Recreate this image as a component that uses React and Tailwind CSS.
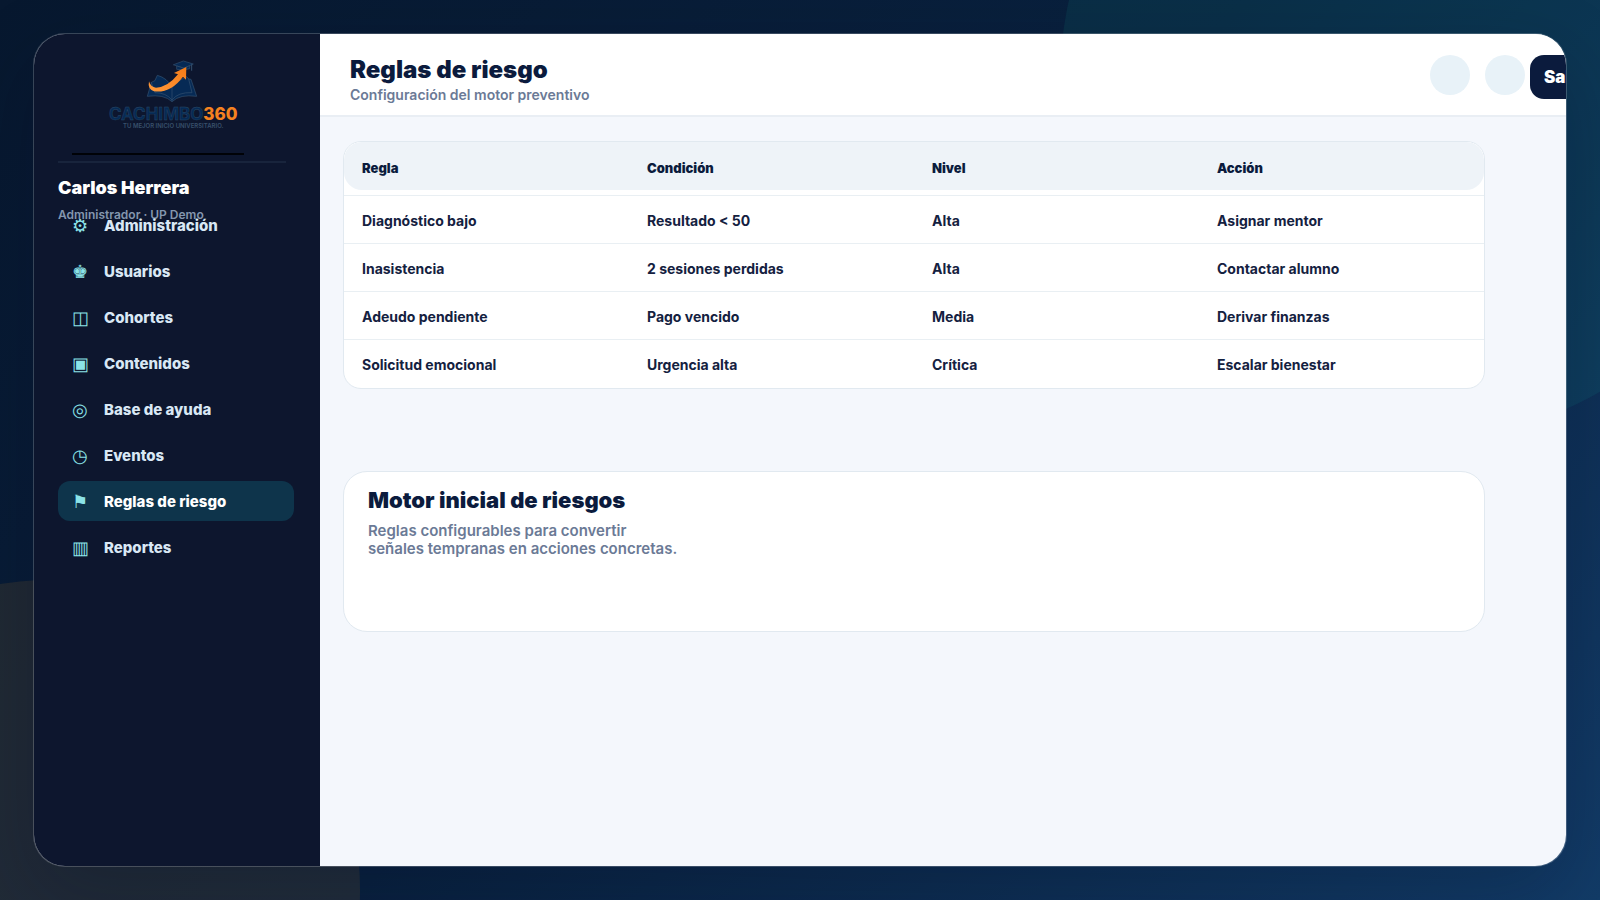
const navItems = [
  { icon: '⚙', label: 'Administración' },
  { icon: '♚', label: 'Usuarios' },
  { icon: '◫', label: 'Cohortes' },
  { icon: '▣', label: 'Contenidos' },
  { icon: '◎', label: 'Base de ayuda' },
  { icon: '◷', label: 'Eventos' },
  { icon: '⚑', label: 'Reglas de riesgo', active: true },
  { icon: '▥', label: 'Reportes' },
];

const columns = ['Regla', 'Condición', 'Nivel', 'Acción'];

const rules = [
  ['Diagnóstico bajo', 'Resultado < 50', 'Alta', 'Asignar mentor'],
  ['Inasistencia', '2 sesiones perdidas', 'Alta', 'Contactar alumno'],
  ['Adeudo pendiente', 'Pago vencido', 'Media', 'Derivar finanzas'],
  ['Solicitud emocional', 'Urgencia alta', 'Crítica', 'Escalar bienestar'],
];

function Logo() {
  return (
    <svg width="172" height="96" viewBox="0 0 172 96" role="img" aria-label="Cachimbo360">
      <defs>
        <linearGradient id="arrow" x1="0" y1="1" x2="1" y2="0">
          <stop offset="0" stopColor="#ff9a3c" />
          <stop offset="1" stopColor="#f47a16" />
        </linearGradient>
      </defs>
      <g transform="translate(18 -10) scale(0.33333)" strokeLinejoin="round" strokeLinecap="round">
        <path
          d="M184 98 L172 139 Q222 132 246 155 Q270 132 320 139 L303 88 L296 87 L290 80 Q262 90 246 112 Q232 84 202 76 L195 91 Z"
          fill="#062a55"
          stroke="#35516f"
          strokeWidth="2"
        />
        <path d="M184 98 L195 128 Q228 128 246 150 Q264 126 306 128 L296 87" fill="none" stroke="#35516f" strokeWidth="2" />
        <path d="M246 112 V153" stroke="#35516f" strokeWidth="2" />
        <path d="M251 44 L280 33 L310 42 L283 54 Z" fill="#062a55" stroke="#35516f" strokeWidth="2" />
        <path d="M260 49 V58 Q280 62 299 56 V47 L283 54 Z" fill="#062a55" stroke="#35516f" strokeWidth="2" />
        <path d="M305 44 V61" stroke="#35516f" strokeWidth="3" />
        <path
          d="M177 94 Q172 117 192 124 Q242 130 279 80 L288 89 L289 51 L252 69 L264 73 Q233 112 198 113 Q182 112 177 94 Z"
          fill="url(#arrow)"
        />
      </g>
      <text x="37" y="60" fontFamily="Inter, sans-serif" fontSize="17" fontWeight="700" fill="#062a55" stroke="#2c4a66" strokeWidth="0.4">
        CACHIMBO<tspan fill="#f58220" stroke="none" fontWeight="800">360</tspan>
      </text>
      <text x="51" y="68" fontFamily="Inter, sans-serif" fontSize="6" fontWeight="600" fill="#38506b">
        TU MEJOR INICIO UNIVERSITARIO.
      </text>
      <rect x="0" y="93" width="172" height="2" fill="#000207" />
    </svg>
  );
}

function Sidebar() {
  return (
    <aside className="w-[286px] shrink-0 bg-[#0d162e] pl-6 pr-[26px]">
      <div className="h-[171px]">
        <div className="mr-2 flex h-[129px] items-end border-b-2 border-[#18243c] pb-[5px] pl-[14px]">
          <Logo />
        </div>
        <p className="mt-[14px] text-[18px] leading-[22px] font-black text-white">Carlos Herrera</p>
        <p className="mt-2 text-[12px] leading-4 font-semibold text-[#8496ae]">Administrador · UP Demo</p>
      </div>
      <nav aria-label="Principal" className="flex flex-col gap-[6px]">
        {navItems.map((item) => (
          <a
            key={item.label}
            href="#"
            aria-current={item.active ? 'page' : undefined}
            className={
              item.active
                ? 'flex h-10 items-center rounded-xl bg-[#0e344b] px-[14px] pt-[2px] text-[15px] font-extrabold text-white'
                : 'flex h-10 items-center rounded-xl px-[14px] pt-[2px] text-[15px] font-extrabold text-[#d9e8f5]'
            }
          >
            <span aria-hidden="true" className="w-8 shrink-0 pb-px text-[18px] leading-5 font-normal text-[#8be3e8]">
              {item.icon}
            </span>
            {item.label}
          </a>
        ))}
      </nav>
    </aside>
  );
}

function Header() {
  return (
    <header className="flex h-[83px] items-start justify-between overflow-hidden border-b-2 border-[#e9eef4] bg-white pt-[21px] pl-[30px]">
      <div>
        <h1 className="text-[24px] leading-[29px] font-black text-[#0b1b3d]">Reglas de riesgo</h1>
        <p className="mt-[2px] text-[14px] leading-[17px] font-semibold text-[#6b7a96]">Configuración del motor preventivo</p>
      </div>
      <div className="flex w-[136px] shrink-0">
        <button type="button" aria-label="Notificaciones" className="mr-[15px] size-10 shrink-0 rounded-full bg-[#e8f2f8]" />
        <button type="button" aria-label="Perfil" className="mr-[5px] size-10 shrink-0 rounded-full bg-[#e8f2f8]" />
        <button type="button" className="h-11 shrink-0 rounded-[14px] bg-[#0b1b3d] px-[14px] pt-[2px] text-[17px] font-black text-white">
          Salir
        </button>
      </div>
    </header>
  );
}

function RulesTable() {
  return (
    <div className="overflow-hidden rounded-[18px] border border-[#e1e9f0] bg-white">
      <table className="w-full table-fixed border-collapse text-left">
        <thead>
          <tr>
            {columns.map((name, i) => (
              <th key={name} scope="col" className="p-0 pb-[5px] text-[13px] leading-4 font-black text-[#0b1b3d]">
                <div
                  className={
                    i === 0
                      ? 'flex h-12 items-center rounded-l-[18px] bg-[#eef3f8] pt-[3px] pl-[18px]'
                      : i === columns.length - 1
                        ? 'flex h-12 items-center rounded-r-[18px] bg-[#eef3f8] pt-[3px] pl-[18px]'
                        : 'flex h-12 items-center bg-[#eef3f8] pt-[3px] pl-[18px]'
                  }
                >
                  {name}
                </div>
              </th>
            ))}
          </tr>
        </thead>
        <tbody>
          {rules.map((row) => (
            <tr key={row[0]} className="h-12 border-t border-[#e9eff3]">
              {row.map((cell, i) => (
                <td key={i} className="pt-[2px] pl-[18px] text-[14px] leading-[17px] font-bold text-[#14213f]">
                  {cell}
                </td>
              ))}
            </tr>
          ))}
        </tbody>
      </table>
    </div>
  );
}

export default function App() {
  return (
    <div className="relative flex min-h-screen overflow-hidden bg-linear-135 from-[#07182f] via-[#09213f] to-[#123c68] p-[33px] font-[Inter,sans-serif]">
      <div className="absolute -top-[280px] -right-[180px] size-[720px] rounded-full bg-[#15b0a0]/10" />
      <div className="absolute -bottom-[300px] -left-[260px] size-[620px] rounded-full bg-[#f5a020]/10" />
      <div className="relative flex grow overflow-hidden rounded-[32px] border border-white/20 bg-[#f4f7fc] bg-clip-padding shadow-[0_28px_80px_rgba(0,10,30,0.22)]">
        <Sidebar />
        <div className="min-w-0 grow">
          <Header />
          <main className="flex flex-col gap-[82px] pt-6 pr-[81px] pl-[23px]">
            <RulesTable />
            <section className="h-[161px] rounded-3xl border border-[#e1e9f0] bg-white px-6 pt-[14px]">
              <h2 className="text-[22px] leading-7 font-black text-[#0b1b3d]">Motor inicial de riesgos</h2>
              <p className="mt-2 text-[15px] leading-[18px] font-semibold text-[#6b7a96]">
                Reglas configurables para convertir
                <br />
                señales tempranas en acciones concretas.
              </p>
            </section>
          </main>
        </div>
      </div>
    </div>
  );
}
